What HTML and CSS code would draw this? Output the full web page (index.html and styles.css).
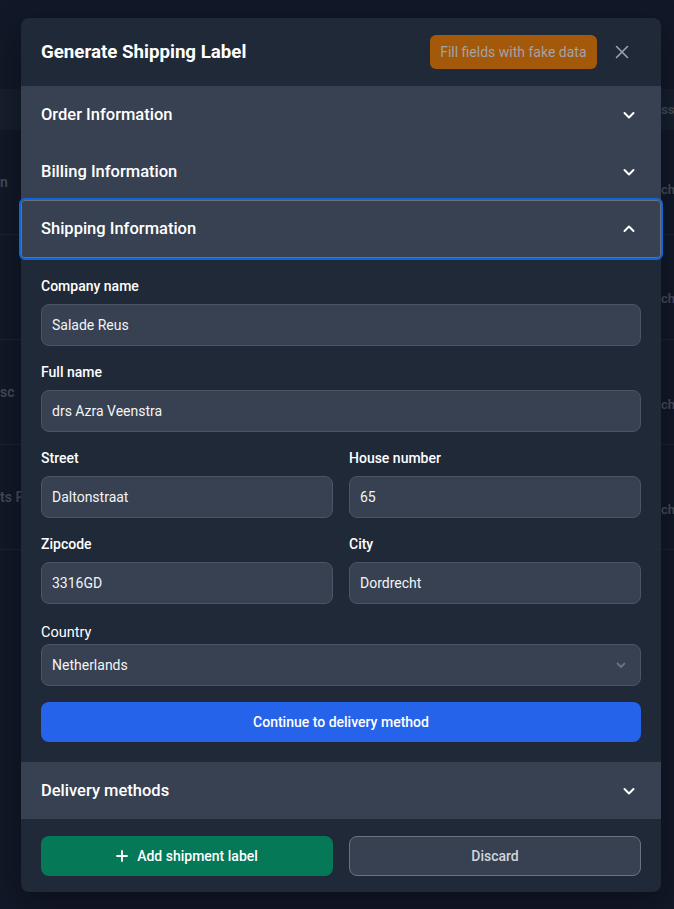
FILE: index.html
```html
<!DOCTYPE html>
<html lang="en">
<head>
<meta charset="utf-8">
<title>Generate Shipping Label</title>
<link rel="stylesheet" href="styles.css">
</head>
<body>
<div class="backdrop">
  <div class="bg-table">
    <div class="bg-row bg-head">
      <div class="bg-left"></div>
      <div class="bg-right">ss</div>
    </div>
    <div class="bg-row">
      <div class="bg-left">n</div>
      <div class="bg-right r1b">ch</div>
    </div>
    <div class="bg-row">
      <div class="bg-left"></div>
      <div class="bg-right r2b">ch</div>
    </div>
    <div class="bg-row">
      <div class="bg-left">sc</div>
      <div class="bg-right r3b">ch</div>
    </div>
    <div class="bg-row">
      <div class="bg-left">ts P</div>
      <div class="bg-right r3b">ch</div>
    </div>
  </div>
</div>

<div class="modal">
  <div class="modal-header">
    <h2 class="modal-title">Generate Shipping Label</h2>
    <div class="header-actions">
      <button class="fake-btn" type="button">Fill fields with fake data</button>
      <button class="close-btn" type="button" aria-label="Close">
        <svg width="14" height="14" viewBox="0 0 14 14" fill="none" stroke="#9ca3af" stroke-width="1.6" stroke-linecap="round"><path d="M1.5 1.5l11 11M12.5 1.5l-11 11"/></svg>
      </button>
    </div>
  </div>

  <div class="acc-head">
    <span>Order Information</span>
    <svg class="chev" width="16" height="16" viewBox="0 0 16 16" fill="none" stroke="#fff" stroke-width="2" stroke-linecap="round" stroke-linejoin="round"><path d="M3.5 6l4.5 4.5L12.5 6"/></svg>
  </div>
  <div class="acc-head">
    <span>Billing Information</span>
    <svg class="chev" width="16" height="16" viewBox="0 0 16 16" fill="none" stroke="#fff" stroke-width="2" stroke-linecap="round" stroke-linejoin="round"><path d="M3.5 6l4.5 4.5L12.5 6"/></svg>
  </div>
  <div class="acc-head acc-focus">
    <span>Shipping Information</span>
    <svg class="chev" width="16" height="16" viewBox="0 0 16 16" fill="none" stroke="#fff" stroke-width="2" stroke-linecap="round" stroke-linejoin="round"><path d="M3.5 10l4.5-4.5 4.5 4.5"/></svg>
  </div>

  <div class="acc-body">
    <div class="field">
      <label class="label">Company name</label>
      <div class="input">Salade Reus</div>
    </div>
    <div class="field">
      <label class="label">Full name</label>
      <div class="input">drs Azra Veenstra</div>
    </div>
    <div class="field-row">
      <div class="field">
        <label class="label">Street</label>
        <div class="input">Daltonstraat</div>
      </div>
      <div class="field">
        <label class="label">House number</label>
        <div class="input">65</div>
      </div>
    </div>
    <div class="field-row">
      <div class="field">
        <label class="label">Zipcode</label>
        <div class="input">3316GD</div>
      </div>
      <div class="field">
        <label class="label">City</label>
        <div class="input">Dordrecht</div>
      </div>
    </div>
    <div class="field country">
      <label class="label label-plain">Country</label>
      <div class="input select">
        <span>Netherlands</span>
        <svg width="12" height="12" viewBox="0 0 12 12" fill="none" stroke="#6b7280" stroke-width="1.8" stroke-linecap="round" stroke-linejoin="round"><path d="M2.5 4.5L6 8l3.5-3.5"/></svg>
      </div>
    </div>
    <button class="primary-btn" type="button">Continue to delivery method</button>
  </div>

  <div class="acc-head">
    <span>Delivery methods</span>
    <svg class="chev" width="16" height="16" viewBox="0 0 16 16" fill="none" stroke="#fff" stroke-width="2" stroke-linecap="round" stroke-linejoin="round"><path d="M3.5 6l4.5 4.5L12.5 6"/></svg>
  </div>

  <div class="modal-footer">
    <button class="add-btn" type="button">
      <svg width="12" height="12" viewBox="0 0 12 12" fill="none" stroke="#fff" stroke-width="1.8" stroke-linecap="round"><path d="M6 1v10M1 6h10"/></svg>
      <span>Add shipment label</span>
    </button>
    <button class="discard-btn" type="button">Discard</button>
  </div>
</div>
</body>
</html>
```

FILE: styles.css
```css
* { box-sizing: border-box; }

html, body {
  margin: 0;
  padding: 0;
}

body {
  background: #111827;
  font-family: Roboto, "Liberation Sans", Arial, sans-serif;
  color: #f3f4f6;
  width: 674px;
  height: 909px;
  overflow: hidden;
  position: relative;
}

/* background page (dimmed, behind modal) */
.backdrop {
  padding-top: 89px;
}

.bg-table {
  display: flex;
  flex-direction: column;
}

.bg-row {
  display: flex;
  justify-content: space-between;
  align-items: center;
  height: 105px;
  border-bottom: 1px solid #1a2232;
  color: #434a57;
  font-size: 14px;
  font-weight: 600;
}

.bg-head {
  height: 41px;
  background: #161e2d;
  border-bottom: none;
}

.bg-left {
  width: 21px;
  white-space: nowrap;
}

.bg-right {
  width: 13px;
  white-space: nowrap;
  overflow: hidden;
  font-size: 13px;
}

.r1b { padding-top: 14px; }
.r2b { padding-top: 22px; }
.r3b { padding-top: 24px; }

/* modal */
.modal {
  position: absolute;
  left: 21px;
  top: 18px;
  width: 640px;
  background: #1f2937;
  border-radius: 8px;
  box-shadow: 0 10px 30px rgba(0, 0, 0, 0.35);
}

.modal-header {
  height: 68px;
  display: flex;
  align-items: center;
  justify-content: space-between;
  padding: 0 25px 0 20px;
}

.modal-title {
  margin: 0;
  font-size: 18.7px;
  font-weight: 700;
  color: #ffffff;
}

.header-actions {
  display: flex;
  align-items: center;
  gap: 11px;
}

.fake-btn {
  height: 34px;
  padding: 0 10.5px;
  border: none;
  border-radius: 6px;
  background: #a3580a;
  color: #a0a3a8;
  font-family: inherit;
  font-size: 14px;
  font-weight: 400;
}

.close-btn {
  width: 28px;
  height: 28px;
  border: none;
  background: transparent;
  display: flex;
  align-items: center;
  justify-content: center;
  padding: 0;
}

.acc-head {
  height: 57px;
  background: #374151;
  display: flex;
  align-items: center;
  justify-content: space-between;
  padding: 0 24px 0 20px;
  font-size: 16.5px;
  font-weight: 500;
  color: #ffffff;
}

.acc-focus {
  height: 58px;
  padding-bottom: 1px;
  position: relative;
  border-radius: 4px;
  outline: 2px solid #0f66d8;
  box-shadow: inset 0 0 0 1px rgba(255, 255, 255, 0.25);
}

.acc-body {
  padding: 18px 20px 20px;
  display: flex;
  flex-direction: column;
}

.field {
  display: flex;
  flex-direction: column;
  margin-bottom: 16px;
}

.field-row {
  display: grid;
  grid-template-columns: 1fr 1fr;
  gap: 16px;
}

.label {
  font-size: 14px;
  line-height: 20px;
  font-weight: 500;
  color: #ffffff;
  margin-bottom: 8px;
}

.country {
  margin-top: 3px;
}

.label-plain {
  font-weight: 400;
  font-size: 14.5px;
  margin-bottom: 1px;
}

.input {
  height: 42px;
  background: #374151;
  border: 1px solid #4b5563;
  border-radius: 8px;
  padding: 0 10px;
  display: flex;
  align-items: center;
  font-size: 14px;
  color: #f3f4f6;
}

.select {
  justify-content: space-between;
  padding-right: 13px;
}

.primary-btn {
  height: 40px;
  border: none;
  border-radius: 8px;
  background: #2563eb;
  color: #ffffff;
  font-family: inherit;
  font-size: 14px;
  font-weight: 500;
}

.modal-footer {
  display: grid;
  grid-template-columns: 1fr 1fr;
  gap: 16px;
  padding: 17px 20px 16px;
}

.add-btn {
  height: 40px;
  border: none;
  border-radius: 8px;
  background: #047857;
  color: #ffffff;
  font-family: inherit;
  font-size: 14px;
  font-weight: 500;
  display: flex;
  align-items: center;
  justify-content: center;
  gap: 9px;
}

.discard-btn {
  height: 40px;
  border: 1px solid #6b7280;
  border-radius: 8px;
  background: #374151;
  color: #d1d5db;
  font-family: inherit;
  font-size: 14px;
  font-weight: 500;
}
```
